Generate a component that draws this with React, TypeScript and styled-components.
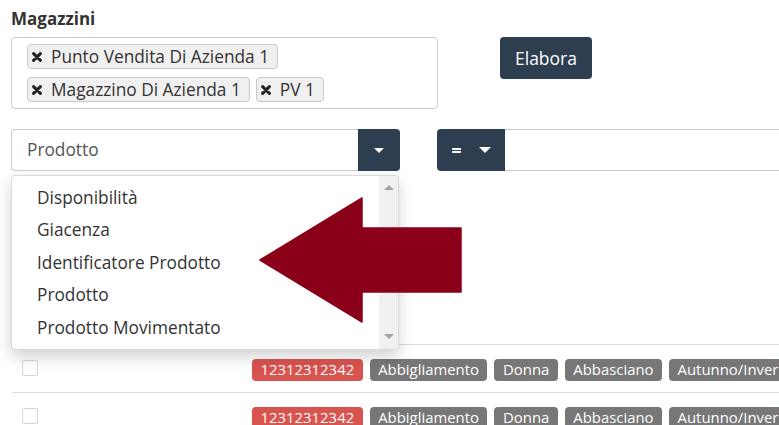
import * as React from "react";
import styled, { createGlobalStyle } from "styled-components";

const GlobalStyle = createGlobalStyle`
  html, body {
    margin: 0;
    padding: 0;
    overflow: hidden;
    background: #fff;
  }
  body {
    font-family: "Open Sans", "Liberation Sans", sans-serif;
    font-size: 17.5px;
    line-height: 25px;
    color: #333;
  }
`;

const Page = styled.div`
  position: relative;
  width: 1100px;
  height: 425px;
  padding: 6px 0 0 11px;
  box-sizing: border-box;
`;

const FieldLabel = styled.div`
  font-weight: 700;
  font-size: 17px;
  margin-bottom: 6px;
`;

const TopRow = styled.div`
  display: flex;
  align-items: flex-start;
`;

const TagBox = styled.div`
  width: 427px;
  height: 72px;
  box-sizing: border-box;
  border: 1px solid #ccc;
  border-radius: 4px;
  padding: 6px 15px;
  display: flex;
  flex-wrap: wrap;
  align-content: flex-start;
  gap: 8px 6px;
`;

const Tag = styled.span`
  display: inline-flex;
  align-items: center;
  height: 25px;
  box-sizing: border-box;
  padding: 0 8px 0 4px;
  background: #f0f0f0;
  border: 1px solid #c9c9c9;
  border-radius: 4px;
  font-size: 17.3px;
  line-height: 23px;
  color: #333;
  white-space: nowrap;
`;

const TagClose = styled.svg`
  width: 10px;
  height: 10px;
  margin-right: 9px;
  flex: none;
`;

const PrimaryButton = styled.button`
  margin-left: 62px;
  height: 42px;
  padding: 0 15px;
  border: none;
  border-radius: 4px;
  background: #2c3e50;
  color: #fff;
  font-family: inherit;
  font-size: 17.5px;
`;

const FilterRow = styled.div`
  display: flex;
  align-items: flex-start;
  margin-top: 20px;
`;

const SelectGroup = styled.div`
  position: relative;
  display: flex;
  width: 389px;
  height: 42px;
`;

const SelectValue = styled.div`
  flex: 1;
  box-sizing: border-box;
  border: 1px solid #ccc;
  border-right: none;
  border-radius: 4px 0 0 4px;
  padding: 7px 15px;
  color: #555;
  font-size: 17.3px;
`;

const Addon = styled.div<{ $round: string }>`
  display: flex;
  align-items: center;
  justify-content: center;
  gap: 17px;
  background: #2c3e50;
  color: #fff;
  border-radius: ${p => p.$round};
  font-weight: 700;
`;

const Caret = styled.span<{ $w: number }>`
  width: 0;
  height: 0;
  border-left: ${p => p.$w / 2}px solid transparent;
  border-right: ${p => p.$w / 2}px solid transparent;
  border-top: ${p => Math.round(p.$w / 2)}px solid #fff;
`;

const OperatorGroup = styled.div`
  display: flex;
  flex: 1;
  height: 42px;
  margin-left: 37px;
`;

const ValueInput = styled.div`
  flex: 1;
  border-top: 1px solid #ccc;
  border-bottom: 1px solid #ccc;
`;

const Menu = styled.div`
  position: absolute;
  top: 46px;
  left: 0;
  width: 388px;
  height: 175px;
  box-sizing: border-box;
  display: flex;
  background: #fff;
  border: 1px solid rgba(0, 0, 0, 0.15);
  border-radius: 4px;
  box-shadow: 0 7px 15px rgba(0, 0, 0, 0.175);
  overflow: hidden;
  z-index: 5;
`;

const MenuList = styled.ul`
  flex: 1;
  list-style: none;
  margin: 0;
  padding: 5px 0;
`;

const MenuItem = styled.li`
  padding: 3.75px 25px;
  line-height: 25px;
  font-size: 17.3px;
  color: #333;
  white-space: nowrap;
`;

const ScrollTrack = styled.div`
  width: 19px;
  background: #f1f1f1;
  display: flex;
  flex-direction: column;
  align-items: center;
  justify-content: space-between;
  padding: 9px 0 10px;
`;

const ScrollArrow = styled.span<{ $up?: boolean }>`
  width: 0;
  height: 0;
  border-left: 5px solid transparent;
  border-right: 5px solid transparent;
  ${p =>
    p.$up
      ? "border-bottom: 5px solid #a3a3a3;"
      : "border-top: 5px solid #a3a3a3;"}
`;

const Table = styled.div`
  margin-top: 173px;
  margin-left: 1px;
`;

const Row = styled.div`
  display: flex;
  align-items: center;
  height: 48px;
  box-sizing: border-box;
  border-top: 1px solid #ddd;
  padding-left: 10px;
`;

const Check = styled.span`
  flex: none;
  width: 14px;
  height: 14px;
  border: 1px solid #d6d6d6;
  border-radius: 2px;
  margin-top: -2px;
`;

const Labels = styled.div`
  display: flex;
  gap: 7px;
  margin-left: 214px;
  margin-top: 3px;
`;

const Badge = styled.span<{ $tone: string }>`
  display: inline-block;
  padding: 3px 8.5px 4px;
  font-size: 14.9px;
  line-height: 15px;
  color: #fff;
  background: ${p => p.$tone};
  border-radius: 4px;
  white-space: nowrap;
`;

const Pointer = styled.svg`
  position: absolute;
  left: 258px;
  top: 196px;
  z-index: 10;
`;

const tags = ["Punto Vendita Di Azienda 1", "Magazzino Di Azienda 1", "PV 1"];
const options = [
  "Disponibilità",
  "Giacenza",
  "Identificatore Prodotto",
  "Prodotto",
  "Prodotto Movimentato",
];
const badges = [
  { text: "12312312342", tone: "#d9534f" },
  { text: "Abbigliamento", tone: "#777" },
  { text: "Donna", tone: "#777" },
  { text: "Abbasciano", tone: "#777" },
  { text: "Autunno/Inverno", tone: "#777" },
];

const CloseIcon = () => (
  <TagClose viewBox="0 0 10 10">
    <path
      d="M1.6 1.6 L8.4 8.4 M8.4 1.6 L1.6 8.4"
      stroke="#222"
      strokeWidth="3"
      strokeLinecap="round"
    />
  </TagClose>
);

export default function App() {
  return (
    <Page>
      <GlobalStyle />
      <FieldLabel>Magazzini</FieldLabel>
      <TopRow>
        <TagBox>
          {tags.map(t => (
            <Tag key={t}>
              <CloseIcon />
              {t}
            </Tag>
          ))}
        </TagBox>
        <PrimaryButton>Elabora</PrimaryButton>
      </TopRow>

      <FilterRow>
        <SelectGroup>
          <SelectValue>Prodotto</SelectValue>
          <Addon $round="0 4px 4px 0" style={{ width: 42 }}>
            <Caret $w={10} />
          </Addon>
          <Menu>
            <MenuList>
              {options.map(o => (
                <MenuItem key={o}>{o}</MenuItem>
              ))}
            </MenuList>
            <ScrollTrack>
              <ScrollArrow $up />
              <ScrollArrow />
            </ScrollTrack>
          </Menu>
        </SelectGroup>
        <OperatorGroup>
          <Addon $round="4px 0 0 4px" style={{ width: 68 }}>
            <span>=</span>
            <Caret $w={12} />
          </Addon>
          <ValueInput />
        </OperatorGroup>
      </FilterRow>

      <Table>
        {[0, 1].map(r => (
          <Row key={r}>
            <Check />
            <Labels>
              {badges.map(b => (
                <Badge key={b.text} $tone={b.tone}>
                  {b.text}
                </Badge>
              ))}
            </Labels>
          </Row>
        ))}
      </Table>

      <Pointer width="206" height="128" viewBox="0 0 206 128">
        <path
          d="M2 64 L104 2 L104 32 L203 32 L203 96 L104 96 L104 126 Z"
          fill="#8a0019"
          stroke="#8a0019"
          strokeWidth="1.5"
          strokeLinejoin="round"
        />
      </Pointer>
    </Page>
  );
}
